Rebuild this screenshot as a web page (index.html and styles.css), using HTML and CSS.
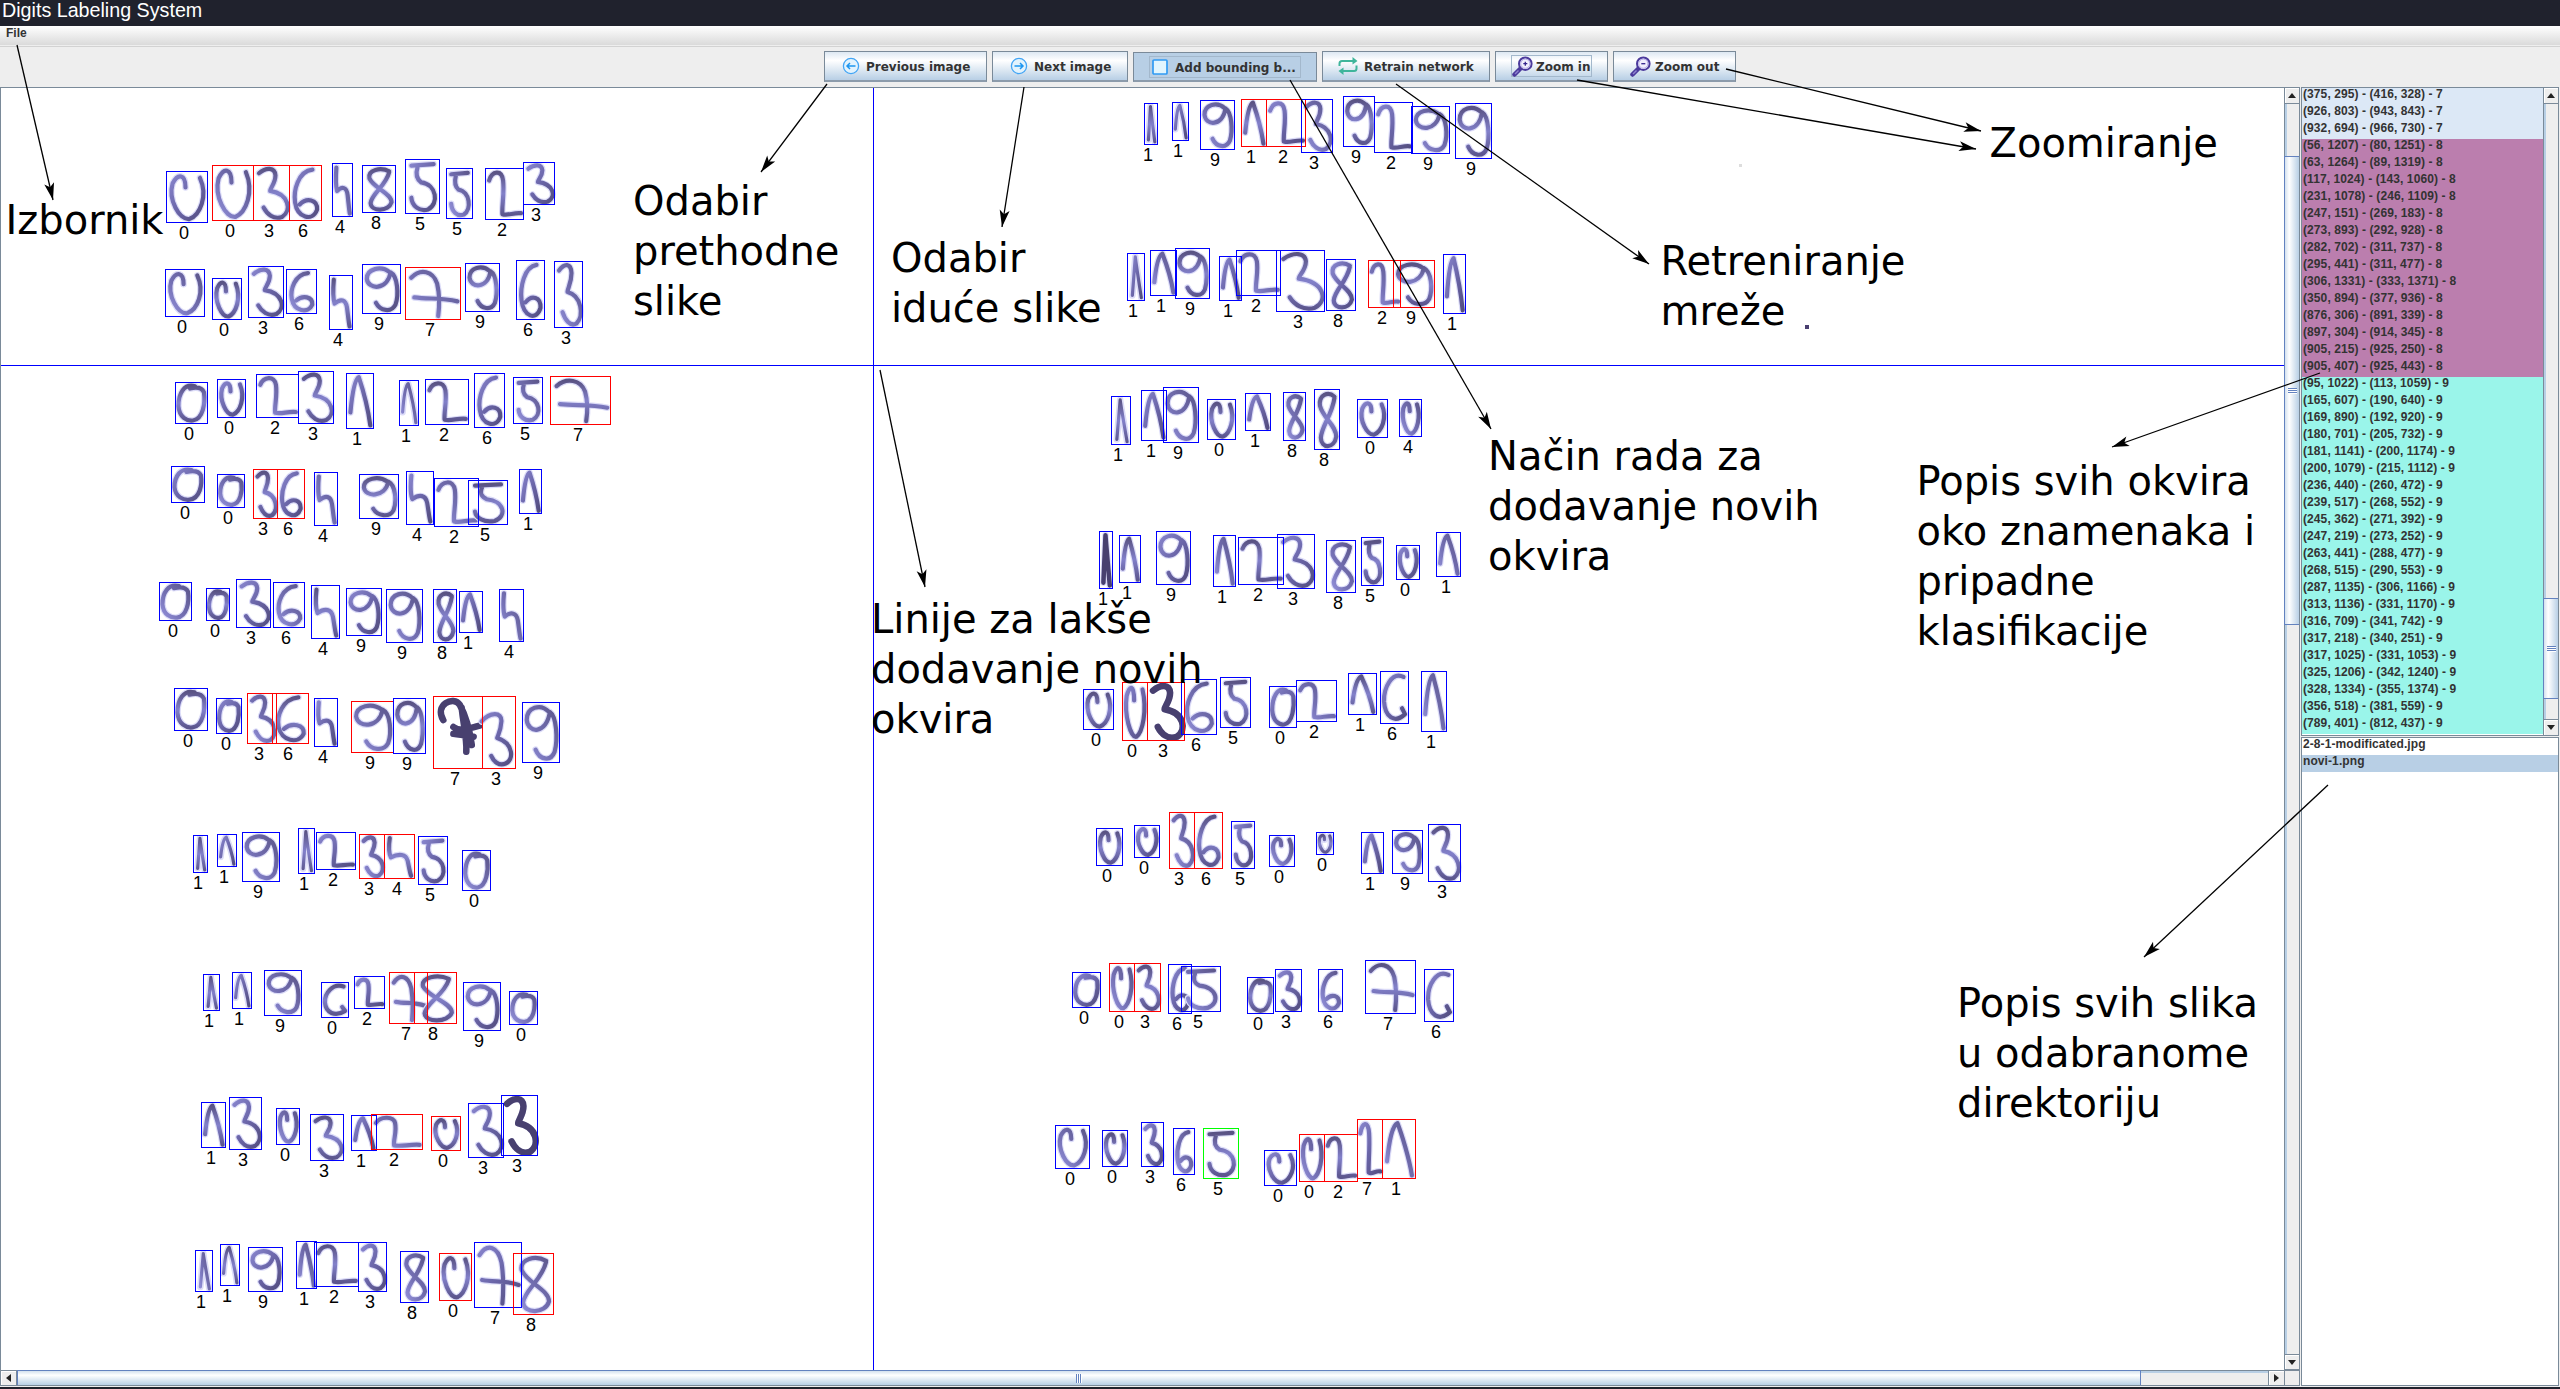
FILE: index.html
```html
<!DOCTYPE html>
<html lang="hr">
<head>
<meta charset="utf-8">
<title>Digits Labeling System</title>
<link rel="stylesheet" href="styles.css">
</head>
<body>
<header class="titlebar">Digits Labeling System</header>
<nav class="menubar"><span>File</span></nav>
<div class="toolbar">
  <button class="tool prev"><svg class="icon" viewBox="0 0 18 18" width="18" height="18"><circle cx="9" cy="9" r="7.6" fill="#e3f3fd" stroke="#42a5f5" stroke-width="1.3"/><path d="M13.5 9H5M8 6L5 9L8 12" fill="none" stroke="#1e96f0" stroke-width="1.5"/></svg><span>Previous image</span></button>
  <button class="tool next"><svg class="icon" viewBox="0 0 18 18" width="18" height="18"><circle cx="9" cy="9" r="7.6" fill="#e3f3fd" stroke="#42a5f5" stroke-width="1.3"/><path d="M4.500 9H13M10 6L13 9L10 12" fill="none" stroke="#1e96f0" stroke-width="1.5"/></svg><span>Next image</span></button>
  <button class="tool add pressed"><span class="focus"><svg class="icon" viewBox="0 0 18 18" width="18" height="18"><rect x="2" y="2" width="14" height="14" rx="1" fill="#e1f5fe" stroke="#2f9bf4" stroke-width="1.700"/></svg><span>Add bounding b...</span></span></button>
  <button class="tool retrain"><svg class="icon" viewBox="0 0 20 18" width="20" height="18"><path d="M1.500 9V6.500Q1.500 4 4 4H15M18.500 8.500V11.500Q18.500 14 16 14H5" fill="none" stroke="#3fb59b" stroke-width="2"/><path d="M14.500 0L19.500 4L14.500 7.500ZM5.500 10.500L.5 14L5.500 18Z" fill="#3fb59b"/></svg><span>Retrain network</span></button>
  <button class="tool zin"><span class="focus"><svg class="icon lens" viewBox="0 0 21 21" width="21" height="21"><path d="M8.500 12.500L2.500 18.500" stroke="#4b3a9c" stroke-width="4.500" stroke-linecap="round"/><path d="M6.500 14.500L3 18" stroke="#8f83cf" stroke-width="1.500"/><circle cx="13.300" cy="7.700" r="6.300" fill="#f1effc" stroke="#4b3a9c" stroke-width="2"/><circle cx="13.300" cy="7.700" r="4.600" fill="none" stroke="#b3aae6"/><path d="M11.300 7.700H15.300M13.300 5.700V9.700" stroke="#34238c" stroke-width="1.300"/></svg><span>Zoom in</span></span></button>
  <button class="tool zout"><svg class="icon lens" viewBox="0 0 21 21" width="21" height="21"><path d="M8.500 12.500L2.500 18.500" stroke="#4b3a9c" stroke-width="4.500" stroke-linecap="round"/><path d="M6.500 14.500L3 18" stroke="#8f83cf" stroke-width="1.500"/><circle cx="13.300" cy="7.700" r="6.300" fill="#f1effc" stroke="#4b3a9c" stroke-width="2"/><circle cx="13.300" cy="7.700" r="4.600" fill="none" stroke="#b3aae6"/><path d="M11.300 7.700H15.300" stroke="#34238c" stroke-width="1.300"/></svg><span>Zoom out</span></button>
</div>
<main class="workspace">
  <section class="pane image-pane">
    <svg class="canvas" id="canvas" viewBox="1 88 2283 1282" width="2283" height="1282">
      <defs>
        <linearGradient id="ink0" x1="0" y1="0" x2="1" y2="1"><stop offset="0" stop-color="#8683cb"/><stop offset=".5" stop-color="#6a65a8"/><stop offset="1" stop-color="#544e80"/></linearGradient>
        <linearGradient id="ink1" x1="1" y1="0" x2="0" y2="1"><stop offset="0" stop-color="#5d578c"/><stop offset=".6" stop-color="#7470b4"/><stop offset="1" stop-color="#918fd8"/></linearGradient>
        <linearGradient id="ink2" x1="0" y1="0" x2="0" y2="1"><stop offset="0" stop-color="#5a5384"/><stop offset=".5" stop-color="#8280ca"/><stop offset="1" stop-color="#5c568e"/></linearGradient>
      </defs>
    </svg>
    <div class="vbar">
      <div class="arrow up"></div><div class="track"><div class="thumb main-thumb"><i></i></div></div><div class="arrow down"></div>
    </div>
    <div class="hbar">
      <div class="arrow left"></div><div class="track"><div class="thumb"><i></i></div></div><div class="arrow right"></div>
    </div>
    <div class="corner"></div>
  </section>
  <aside class="side">
    <section class="pane box-pane">
      <ul class="list" id="boxes"></ul>
      <div class="vbar">
        <div class="arrow up"></div><div class="track"><div class="thumb list-thumb"><i></i></div></div><div class="arrow down"></div>
      </div>
    </section>
    <section class="pane file-pane">
      <ul class="list"><li>2-8-1-modificated.jpg</li><li class="selected">novi-1.png</li></ul>
    </section>
  </aside>
</main>
<svg class="notes" id="notes" viewBox="0 0 2560 1389" width="2560" height="1389">
  <text x="5.500" y="234">Izbornik</text>
  <text><tspan x="633" y="215">Odabir</tspan><tspan x="633" y="265">prethodne</tspan><tspan x="633" y="315">slike</tspan></text>
  <text><tspan x="891" y="272">Odabir</tspan><tspan x="891" y="322">iduće slike</tspan></text>
  <text><tspan x="1660.500" y="275">Retreniranje</tspan><tspan x="1660.500" y="325">mreže</tspan></text>
  <text x="1989.500" y="157">Zoomiranje</text>
  <text><tspan x="1488" y="470">Način rada za</tspan><tspan x="1488" y="520">dodavanje novih</tspan><tspan x="1488" y="570">okvira</tspan></text>
  <text><tspan x="871" y="633">Linije za lakše</tspan><tspan x="871" y="683">dodavanje novih</tspan><tspan x="871" y="733">okvira</tspan></text>
  <text><tspan x="1916.500" y="495">Popis svih okvira</tspan><tspan x="1916.500" y="545">oko znamenaka i</tspan><tspan x="1916.500" y="595">pripadne</tspan><tspan x="1916.500" y="645">klasifikacije</tspan></text>
  <text><tspan x="1957" y="1017">Popis svih slika</tspan><tspan x="1957" y="1067">u odabranome</tspan><tspan x="1957" y="1117">direktoriju</tspan></text>
</svg>
<script src="app.js"></script>
</body>
</html>
```
FILE: styles.css
```css
* { box-sizing: border-box; }
body {
  margin: 0;
  width: 2560px;
  height: 1389px;
  display: flex;
  flex-direction: column;
  overflow: hidden;
  position: relative;
  background: #20222d;
  font: bold 12px/17px "Liberation Sans", sans-serif;
  color: #333;
}
.titlebar {
  height: 26px;
  padding-left: 2px;
  font: 19.7px/21px "Liberation Sans", sans-serif;
  color: #fff;
}
.menubar {
  height: 21px;
  padding: 0 6px;
  line-height: 15px;
  border-bottom: 1px solid #d2d2d2;
  background: linear-gradient(#fff, #dadada 19px, #eee 19px);
}
.toolbar {
  height: 40px;
  display: flex;
  justify-content: center;
  gap: 5px;
  padding-top: 4px;
  background: #eee;
}
.tool {
  height: 31px;
  display: flex;
  align-items: center;
  padding: 0 0 0 17px;
  border: 1px solid #7a8a99;
  border-bottom-width: 2px;
  border-bottom-color: #8c9bab;
  background: linear-gradient(#dde8f3, #fff 30%, #b8cfe5);
  font: bold 12px/14px "DejaVu Sans", sans-serif;
  color: #333;
  white-space: nowrap;
}
.tool .icon { flex: none; margin-right: 6px; }
.tool .icon + span { padding-top: 2px; }
.tool .lens { margin-right: 4px; }
.prev { width: 163px; }
.next { width: 136px; }
.add { width: 184px; }
.retrain { width: 168px; padding-left: 15px; }
.zin { width: 113px; }
.zout { width: 123px; padding-left: 16px; }
.pressed { margin-top: 1px; height: 30px; background: #b8cfe5; }
.focus {
  display: flex;
  align-items: center;
  height: 22px;
  border: 1px solid #a3b8cc;
}
.add, .zin { padding-left: 15px; }
.add .focus { width: 152px; padding-left: 1px; }
.zin .focus { width: 81px; }
.zin .lens { margin-right: 3px; }
.workspace {
  height: 1300px;
  display: flex;
  gap: 1px;
  background: #eee;
}
.pane {
  display: grid;
  border: 1px solid #7a8a99;
  background: #fff;
}
.image-pane {
  width: 2300px;
  height: 1299px;
  grid-template: 1fr 15px / 1fr 15px;
}
.canvas { display: block; overflow: hidden; }
.side { width: 258px; display: flex; flex-direction: column; gap: 1px; }
.box-pane { height: 649px; grid-template-columns: 1fr 15px; }
.file-pane { height: 649px; }
.list { margin: 0; padding: 0; list-style: none; overflow: hidden; }
.list li { height: 17px; padding-left: 1px; line-height: 13px; letter-spacing: 0.09px; white-space: nowrap; }
.seven { background: #dce8f6; }
.eight { background: #bb7eae; }
.nine { background: #9af5ea; }
.selected { background: #b8cfe5; }
.vbar, .hbar { display: flex; background: #eee; }
.vbar { flex-direction: column; border-left: 1px solid #7a8a99; }
.hbar { border-top: 1px solid #7a8a99; }
.corner { background: #eee; border-top: 1px solid #7a8a99; border-left: 1px solid #7a8a99; }
.track { flex: 1; display: flex; }
.vbar .track { flex-direction: column; box-shadow: inset 2px 0 #b8cfe5; }
.hbar .track { box-shadow: inset 0 2px #b8cfe5; }
.arrow {
  flex: none;
  display: flex;
  align-items: center;
  justify-content: center;
  box-shadow: inset 1px 1px #fff;
}
.vbar .arrow { height: 16px; }
.hbar .arrow { width: 16px; }
.up { border-bottom: 1px solid #7a8a99; }
.down { border-top: 1px solid #7a8a99; }
.left { border-right: 1px solid #7a8a99; }
.right { border-left: 1px solid #7a8a99; }
.image-pane .down { border-bottom: 1px solid #7a8a99; }
.arrow::before { content: ""; border: 4px solid transparent; }
.up::before { border-top: 0; border-bottom: 5px solid #222; }
.down::before { border-bottom: 0; border-top: 5px solid #222; }
.left::before { border-left: 0; border-right: 5px solid #222; }
.right::before { border-right: 0; border-left: 5px solid #222; }
.thumb { display: flex; align-items: center; justify-content: center; border: 1px solid #6382bf; }
.thumb i { display: block; }
.vbar .thumb { border-right: 0; margin-left: -1px; background: linear-gradient(90deg, #d4e1ee, #fff 30%, #b8cfe5); }
.hbar .thumb { border-bottom: 0; margin-top: -1px; width: 2124px; background: linear-gradient(#d4e1ee, #fff 30%, #b8cfe5); }
.vbar i { width: 9px; height: 6px; background: repeating-linear-gradient(#6382bf 0 1px, #fff 1px 2px); }
.hbar i { width: 6px; height: 9px; background: repeating-linear-gradient(90deg, #6382bf 0 1px, #fff 1px 2px); }
.vbar .main-thumb { margin-top: 52px; height: 469px; }
.vbar .list-thumb { margin-top: 494px; height: 101px; }
.notes { position: absolute; left: 0; top: 0; pointer-events: none; }
.notes text { font: 40px "DejaVu Sans", sans-serif; fill: #000; }
.canvas text { font: 18px "Liberation Sans", sans-serif; fill: #000; }
.frame { fill: none; stroke: #00f; shape-rendering: crispEdges; }
.frame.r { stroke: #f00; }
.frame.g { stroke: #0f0; }
.guide { stroke: #00f; shape-rendering: crispEdges; }
.halo, .stroke { fill: none; stroke-linecap: round; stroke-linejoin: round; vector-effect: non-scaling-stroke; }
.halo { stroke: #dcdcf8; stroke-width: 6.5px; }
.stroke { stroke-width: 4.2px; }
.narrow { stroke-width: 3.2px; }
.bold { stroke: #48406f; stroke-width: 6.5px; }
.bold.narrow { stroke-width: 4.5px; }
.leader { stroke: #000; stroke-width: 1.3; }
```
FILE: app.js
```js
const NS = "http://www.w3.org/2000/svg";
const add = (parent, name, attrs, text) => {
  const el = document.createElementNS(NS, name);
  for (const k in attrs) el.setAttribute(k, attrs[k]);
  if (text) el.textContent = text;
  parent.appendChild(el);
  return el;
};

// Pen strokes on a 100 x 100 grid, stretched to each box.
const pens = {
  o: "M62,6 C25,-2 5,25 5,58 C8,88 35,98 55,96 C90,92 98,50 93,22 C85,8 65,8 45,12",
  u: "M46,30 C46,2 26,0 12,22 C0,56 30,98 56,96 C84,88 106,48 84,10",
  c: "M86,8 C40,-4 6,30 8,58 C12,90 50,104 92,84 L80,72",
  i: "M45,4 L24,92 M45,5 C55,30 75,70 88,97",
  s: "M18,32 C-2,10 40,-4 54,10 C70,30 76,50 80,68 M58,14 C62,40 70,60 68,78 M40,42 C55,50 75,44 97,40 M40,52 L84,56",
  "1": "M10,72 C18,32 28,8 45,4 C58,22 84,66 93,97",
  "2": "M6,22 C14,2 42,-2 46,22 C50,50 42,74 44,92 C60,96 76,88 97,90",
  "3": "M12,12 C34,0 60,0 62,16 C62,32 46,40 46,46 C104,52 112,84 82,96 C56,102 36,90 26,78",
  t: "M-8,34 C20,20 60,20 58,34 C56,48 46,54 44,58 C100,66 100,90 72,95 C50,99 32,92 24,84",
  "4": "M14,5 C10,24 10,42 18,52 C48,42 74,44 80,60 C85,74 88,88 93,97",
  "5": "M14,9 L86,6 M34,12 C26,28 32,36 46,42 C96,46 104,84 68,95 C40,100 16,88 14,72",
  "6": "M74,5 C24,8 8,46 14,68 C22,98 74,106 90,82 C92,62 54,58 30,72",
  "7": "M8,18 C26,-2 50,4 58,30 C64,58 62,80 60,96 M14,58 C42,62 66,58 97,66",
  "8": "M84,10 C56,0 12,6 18,26 C32,48 92,60 92,80 C82,102 24,102 22,82 C26,60 72,44 84,12",
  "9": "M74,14 C48,-2 8,6 8,28 C12,52 66,54 76,14 C96,22 100,62 90,84 C78,102 46,98 34,80",
};

// Each tile: origin, units per pixel on both axes, then
// "left top right bottom label [pen] [flags]" records.
// Flags: r = red, g = green, b = heavy pen.
const tiles = [
  [0, 0, 1.8233, 3, `303 515 378 667 0 u;388 496 463 660 0 u r;463 496 527 660 3 3 r;527 496 586 660 6 6 r;606 490 643 649 4;661 496 721 637 8;740 478 801 640 5;814 505 861 655 5;885 505 954 658 2;954 487 1011 613 3;
302 808 373 949 0 u;388 835 440 958 0 u;453 799 517 952 3;522 808 577 940 6;601 826 643 988 4;661 793 730 940 9;740 802 840 958 7 7 r;849 790 911 934 9;942 781 993 958 6;1011 784 1062 982 3`],
  [130, 360, 3, 3, `136 67 233 190 0 o;262 58 347 172 0 u;379 43 505 173 2;505 34 611 190 3;649 40 731 205 1;808 61 866 196 1;886 58 1016 193 2;1033 40 1124 202 6;1150 52 1238 190 5;1262 49 1442 193 7 7 r;
124 319 224 427 0 o;262 343 344 442 0 o;370 328 443 475 3 3 r;443 328 524 475 6 6 r;553 337 623 496 4;688 343 806 475 9;829 334 911 493 4;913 355 1046 499 2;1015 361 1133 493 5;1168 328 1235 460 1;
88 667 185 781 0 o;229 685 299 781 0 o;319 658 422 802 3;430 667 524 802 6;544 676 629 835 4;649 685 755 826 9;769 688 878 847 9;910 688 980 847 8;988 694 1058 817 1;1108 688 1181 844 4;
133 985 233 1111 0 o;259 1015 335 1120 0 o;352 1000 440 1150 3 3 r;428 1000 536 1150 6 6 r;553 1015 623 1159 4;664 1024 790 1177 9 9 r;790 1015 887 1180 9;910 1009 1058 1225 7 s rb;1058 1009 1157 1225 3 t r;1177 1027 1289 1207 9`],
  [130, 800, 3, 2.662, `190 94 233 193 1 i;262 92 320 178 1;337 86 449 217 9;505 76 554 196 1 i;559 86 677 185 2;688 92 764 209 3 3 r;764 92 854 209 4 4 r;865 98 953 225 5;997 134 1082 241 0 o;
220 464 269 561 1 i;307 459 365 555 1;403 454 515 573 9;574 486 656 579 0 c;673 470 764 555 2;778 459 893 595 7 7 r;854 459 980 595 8 8 r;1000 486 1112 613 9;1138 509 1223 598 0 o;
214 805 287 925 1;298 792 395 930 3;439 821 509 917 0 u;541 837 641 960 3;664 840 740 933 1;724 837 878 930 2 2 r;904 842 992 933 0 u r;1015 808 1121 952 3;1114 786 1223 946 3 3 b;
196 1199 248 1308 1 i;271 1183 329 1292 1;355 1191 458 1308 9;499 1175 560 1300 1;553 1178 685 1295 2;685 1178 770 1308 3;811 1202 896 1337 8;928 1207 1025 1332 0 u r;1033 1178 1175 1351 7;1150 1207 1271 1369 8 8 r`],
  [1020, 360, 3, 3, `274 109 332 253 1 i;364 91 440 241 1;430 82 536 247 9;562 118 647 238 0 u;676 100 752 211 1;790 97 857 241 8;883 88 959 268 8;1012 118 1103 232 0 u;1138 118 1205 229 4 u;
238 514 278 685 1 i b;298 526 362 667 1;409 514 512 673 9;580 526 647 679 1;655 532 791 673 2;772 523 884 685 3;919 541 1007 697 8;1024 532 1091 676 5;1129 556 1199 658 0 u;1249 517 1322 649 1;
190 988 281 1108 0 u;307 967 383 1141 0 u r;383 967 494 1141 3 3 rb;485 958 590 1123 6;601 952 692 1102 5;748 979 830 1102 0 o;830 961 950 1084 2;985 940 1070 1063 1;1081 934 1166 1090 6 c;1204 934 1280 1114 1`],
  [1020, 780, 3, 3, `229 145 308 256 0 u;343 136 419 232 0 u;448 97 524 265 3 3 r;524 97 608 265 6 6 r;634 124 704 265 5;748 166 824 259 0 u;889 157 941 223 0 u;1024 157 1091 280 1;1117 151 1208 280 9;1225 133 1322 304 3;
157 577 242 682 0 o;268 550 344 694 0 u r;344 550 422 694 3 3 r;445 553 515 700 6;484 559 602 694 5;682 592 761 700 0 o;766 568 845 694 3;895 568 968 694 6;1036 541 1187 700 7;1213 568 1301 724 6 c;
106 1036 209 1165 0 u;247 1051 323 1159 0 u;364 1027 431 1159 3;460 1045 524 1183 6;550 1045 656 1195 5 5 g;733 1111 830 1216 0 u;838 1063 914 1204 0 u r;914 1063 1013 1204 2 2 r;1013 1018 1086 1195 7 2 r;1086 1018 1187 1195 1 1 r`],
  [1060, 80, 3, 3, `253 70 293 193 1 i;337 67 386 181 1;421 61 524 208 9;544 58 620 199 1 1 r;620 58 737 199 2 2 r;725 58 818 217 3;850 49 944 199 9;944 67 1058 217 2;1054 79 1168 220 9;1186 70 1295 235 9;
202 520 254 661 1 i;271 511 350 646 1;346 505 448 655 9;478 529 545 661 1;529 511 661 646 2;649 511 794 694 3;799 538 887 691 8;925 541 1021 682 2 2 r;1001 541 1124 682 9 9 r;1150 523 1217 700 1`],
];

const canvas = document.getElementById("canvas");
const ink = add(canvas, "g", {});
const frames = add(canvas, "g", {});
let n = 0;
for (const [ox, oy, sx, sy, data] of tiles) {
  for (const record of data.split(";")) {
    const [l, t, r, b, label, pen = label, flags = ""] = record.trim().split(" ");
    const x = Math.floor(ox + l / sx), y = Math.floor(oy + t / sy);
    const w = Math.floor(ox + r / sx) - x, h = Math.floor(oy + b / sy) - y;
    const transform = `translate(${x + 2} ${y + 2}) scale(${(w - 3) / 100} ${(h - 3) / 100})`;
    const heavy = flags.includes("b");
    add(ink, "path", { d: pens[pen], transform, class: "halo" });
    const s = add(ink, "path", { d: pens[pen], transform, class: "stroke" + (heavy ? " bold" : "") + (w < 20 ? " narrow" : "") });
    if (!heavy) s.setAttribute("stroke", `url(#ink${n++ % 3})`);
    add(frames, "rect", { x: x + 0.5, y: y + 0.5, width: w, height: h, class: "frame " + flags.replace("b", "") });
    add(frames, "text", { x: Math.floor(x + w / 2) - 7, y: y + h + 17 }, label);
  }
}
add(canvas, "path", { d: "M1,365.5H2284M873.5,88V1370", class: "guide" });
add(canvas, "rect", { x: 1805, y: 325, width: 4, height: 4, fill: "#4a3f70" });
add(canvas, "rect", { x: 1739, y: 164, width: 3, height: 3, fill: "#ddd" });

// Leader lines from the captions to the parts they describe.
const leaders = [
  [17, 45, 53, 200], [827, 84, 761, 172], [1024, 87, 1002, 227], [1290, 80, 1491, 429],
  [1396, 84, 1649, 264], [1577, 80, 1976, 149], [1726, 69, 1981, 131], [2320, 373, 2112, 447],
  [2328, 785, 2144, 957], [880, 370, 925, 587],
];
const notes = document.getElementById("notes");
for (const [x1, y1, x2, y2] of leaders) {
  const deg = Math.atan2(y2 - y1, x2 - x1) * 180 / Math.PI;
  add(notes, "line", { x1, y1, x2, y2, class: "leader" });
  add(notes, "path", { d: "M0,0L-17,-5L-13,0L-17,5Z", transform: `translate(${x2} ${y2}) rotate(${deg})` });
}

const boxes = {
  seven: ["(375, 295) - (416, 328) - 7", "(926, 803) - (943, 843) - 7", "(932, 694) - (966, 730) - 7"],
  eight: ["(56, 1207) - (80, 1251) - 8", "(63, 1264) - (89, 1319) - 8", "(117, 1024) - (143, 1060) - 8", "(231, 1078) - (246, 1109) - 8", "(247, 151) - (269, 183) - 8", "(273, 893) - (292, 928) - 8", "(282, 702) - (311, 737) - 8", "(295, 441) - (311, 477) - 8", "(306, 1331) - (333, 1371) - 8", "(350, 894) - (377, 936) - 8", "(876, 306) - (891, 339) - 8", "(897, 304) - (914, 345) - 8", "(905, 215) - (925, 250) - 8", "(905, 407) - (925, 443) - 8"],
  nine: ["(95, 1022) - (113, 1059) - 9", "(165, 607) - (190, 640) - 9", "(169, 890) - (192, 920) - 9", "(180, 701) - (205, 732) - 9", "(181, 1141) - (200, 1174) - 9", "(200, 1079) - (215, 1112) - 9", "(236, 440) - (260, 472) - 9", "(239, 517) - (268, 552) - 9", "(245, 362) - (271, 392) - 9", "(247, 219) - (273, 252) - 9", "(263, 441) - (288, 477) - 9", "(268, 515) - (290, 553) - 9", "(287, 1135) - (306, 1166) - 9", "(313, 1136) - (331, 1170) - 9", "(316, 709) - (341, 742) - 9", "(317, 218) - (340, 251) - 9", "(317, 1025) - (331, 1053) - 9", "(325, 1206) - (342, 1240) - 9", "(328, 1334) - (355, 1374) - 9", "(356, 518) - (381, 559) - 9", "(789, 401) - (812, 437) - 9"],
};
const list = document.getElementById("boxes");
for (const kind in boxes) {
  for (const text of boxes[kind]) {
    const li = document.createElement("li");
    li.className = kind;
    li.textContent = text;
    list.appendChild(li);
  }
}
```
